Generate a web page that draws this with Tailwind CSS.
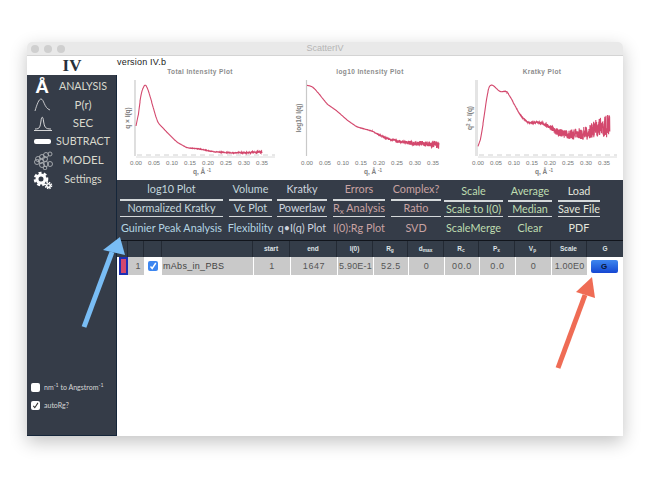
<!DOCTYPE html>
<html lang="en">
<head>
<meta charset="UTF-8">
<title>ScatterIV</title>
<script src="https://cdn.jsdelivr.net/npm/@tailwindcss/browser@4"></script>
</head>
<body class="relative w-[650px] h-[488px] overflow-hidden bg-white font-['Lato',sans-serif]">

<!-- window -->
<div class="absolute left-[27px] top-[42px] w-[596px] h-[394px] flex flex-col rounded-t-[5px] bg-white shadow-[0_6px_18px_rgba(0,0,0,0.24)]">

    <!-- title bar -->
    <div class="relative h-[14px] flex items-center justify-center rounded-t-[5px] bg-[#e9e9e9] border-b border-[#d4d4d4]">
        <div class="absolute left-[4px] flex gap-[5px]">
            <span class="w-[8px] h-[8px] rounded-full bg-[#cfcfcf]"></span>
            <span class="w-[8px] h-[8px] rounded-full bg-[#cfcfcf]"></span>
            <span class="w-[8px] h-[8px] rounded-full bg-[#cfcfcf]"></span>
        </div>
        <span class="text-[9px] text-[#b5b5b5] font-['Liberation_Sans',sans-serif]">ScatterIV</span>
    </div>

    <div class="flex flex-1 min-h-0">
        <!-- sidebar -->
        <div class="w-[90px] flex flex-col">
            <div class="h-[19px] flex items-center justify-center font-['Liberation_Serif',serif] font-bold text-[17px] text-[#27303c]">IV</div>
            <div class="flex-1 flex flex-col bg-[#353c48] border-r border-b border-[#15263a] text-[#d9d9cd] text-[10.7px]">
                <div class="h-[20px] mt-[1px] flex items-center">
                    <span class="w-[30px] text-center text-[19px] leading-none text-white font-bold font-['Liberation_Sans',sans-serif]">Å</span>
                    <span class="w-[52px] text-center">ANALYSIS</span>
                </div>
                <div class="h-[18px] flex items-center">
                    <svg class="w-[30px] h-[18px]" viewBox="0 0 30 18" fill="none" stroke="#e8e8e8" stroke-width="0.8"><path d="M8 15 C10 8 12 3 14 3 C17 3 17 12 23 14"/></svg>
                    <span class="w-[52px] text-center text-[11.5px]">P(r)</span>
                </div>
                <div class="h-[18px] flex items-center">
                    <svg class="w-[30px] h-[18px]" viewBox="0 0 30 18" fill="none" stroke="#e8e8e8" stroke-width="0.9"><path d="M8 15 C13 15 13 13 14 7 C14.500 2 16 2 16.500 7 C17.500 13 18 15 24 15"/><path d="M7 16.500H25"/></svg>
                    <span class="w-[52px] text-center text-[11.5px]">SEC</span>
                </div>
                <div class="h-[18px] flex items-center">
                    <span class="ml-[7px] w-[17px] h-[5px] rounded-[2px] bg-white"></span>
                    <span class="w-[58px] ml-[3px] text-center">SUBTRACT</span>
                </div>
                <div class="h-[20px] flex items-center">
                    <svg class="w-[30px] h-[20px]" viewBox="0 0 30 20" fill="none" stroke="#aeb1b4" stroke-width="0.9">
                        <circle cx="11" cy="9" r="2.500"/><circle cx="15" cy="7" r="2.500"/><circle cx="19" cy="5" r="2.500"/><circle cx="23" cy="4" r="2"/>
                        <circle cx="10" cy="12" r="2.500"/><circle cx="14" cy="11" r="2.500"/><circle cx="18" cy="9" r="2.500"/>
                        <circle cx="15" cy="15" r="2.500"/><circle cx="19" cy="14" r="2.500"/><circle cx="23" cy="14" r="2.500"/><circle cx="18" cy="18" r="1.800"/>
                    </svg>
                    <span class="w-[52px] text-center text-[11.5px]">MODEL</span>
                </div>
                <div class="h-[19px] flex items-center">
                    <svg class="w-[30px] h-[20px]" viewBox="0 0 30 20" fill="none" stroke="#fff">
                        <circle cx="14" cy="9" r="4" stroke-width="3"/>
                        <circle cx="14" cy="9" r="6.200" stroke-width="2.200" stroke-dasharray="3 2.200"/>
                        <circle cx="21.500" cy="15.500" r="1.800" stroke-width="1.500"/>
                        <circle cx="21.500" cy="15.500" r="3.200" stroke-width="1.200" stroke-dasharray="1.500 1"/>
                    </svg>
                    <span class="w-[52px] text-center">Settings</span>
                </div>

                <div class="mt-auto mb-[25px] ml-[4px] flex flex-col gap-[9px] text-[7px] text-[#d6d6d6]">
                    <div class="h-[9px] flex items-center gap-[4px] leading-none">
                        <span class="w-[9px] h-[9px] rounded-[2px] bg-white"></span>
                        <span>nm<sup>-1</sup> to Angstrom<sup>-1</sup></span>
                    </div>
                    <div class="h-[9px] flex items-center gap-[4px] leading-none">
                        <span class="w-[9px] h-[9px] rounded-[2px] bg-white flex items-center justify-center">
                            <svg class="w-[7px] h-[7px]" viewBox="0 0 8 8" fill="none" stroke="#333" stroke-width="1.200"><path d="M1.500 4.500L3.200 6.500L6.800 1"/></svg>
                        </span>
                        <span>autoRg?</span>
                    </div>
                </div>
            </div>
        </div>

        <!-- main column -->
        <div class="relative w-[506px] flex flex-col">
            <div class="absolute left-0 top-0 text-[9px] text-[#222] tracking-[0.2px] font-['Liberation_Sans',sans-serif]">version IV.b</div>

            <!-- plots -->
            <div class="h-[124px] flex font-['Liberation_Sans',sans-serif]">
                <svg class="w-[170px] h-[124px]" viewBox="117 56 170 124">
                    <text x="200" y="73.500" text-anchor="middle" font-size="6.500" font-weight="bold" fill="#8c8c8c" letter-spacing="0.4">Total Intensity Plot</text>
                    <path d="M135 80V156" stroke="#c9c9c9" stroke-width="1.200"/>
                    <path d="M136 157H275" stroke="#dcdcdc"/>
                    <path d="M137 155H275" stroke="#d0d0d0" stroke-dasharray="5 4"/>
                    <path id="curve1" fill="none" stroke="#d3486d" stroke-width="1.100"/>
                    <text text-anchor="middle" font-size="6.200" fill="#777" y="165">
                        <tspan x="136">0.00</tspan><tspan x="154">0.05</tspan><tspan x="172">0.10</tspan><tspan x="190">0.15</tspan><tspan x="208">0.20</tspan><tspan x="226">0.25</tspan><tspan x="244">0.30</tspan><tspan x="262">0.35</tspan>
                    </text>
                    <text x="202" y="174" text-anchor="middle" font-size="6.500" font-weight="bold" fill="#808080">q, Å <tspan font-size="4.500" dy="-2">-1</tspan></text>
                    <text transform="translate(130 118) rotate(-90)" text-anchor="middle" font-size="6.500" font-weight="bold" fill="#808080">q × I(q)</text>
                </svg>
                <svg class="w-[170px] h-[124px]" viewBox="287 56 170 124">
                    <text x="370" y="73.500" text-anchor="middle" font-size="6.500" font-weight="bold" fill="#8c8c8c" letter-spacing="0.4">log10 Intensity Plot</text>
                    <path d="M306.500 80V156" stroke="#c9c9c9" stroke-width="1.200"/>
                    <path id="curve2" fill="none" stroke="#d3486d" stroke-width="1.100"/>
                    <text text-anchor="middle" font-size="6.200" fill="#777" y="165">
                        <tspan x="307">0.00</tspan><tspan x="325">0.05</tspan><tspan x="343">0.10</tspan><tspan x="361">0.15</tspan><tspan x="379">0.20</tspan><tspan x="397">0.25</tspan><tspan x="415">0.30</tspan><tspan x="433">0.35</tspan>
                    </text>
                    <text x="373" y="174" text-anchor="middle" font-size="6.500" font-weight="bold" fill="#808080">q, Å <tspan font-size="4.500" dy="-2">-1</tspan></text>
                    <text transform="translate(301 118) rotate(-90)" text-anchor="middle" font-size="6.500" font-weight="bold" fill="#808080">log10 I(q)</text>
                </svg>
                <svg class="w-[166px] h-[124px]" viewBox="457 56 166 124">
                    <text x="542" y="73.500" text-anchor="middle" font-size="6.500" font-weight="bold" fill="#8c8c8c" letter-spacing="0.4">Kratky Plot</text>
                    <path d="M476.500 80V156" stroke="#e4e4e4" stroke-width="3"/>
                    <path d="M478 157H617" stroke="#dcdcdc"/>
                    <path d="M479 155H617" stroke="#d0d0d0" stroke-dasharray="5 4"/>
                    <path id="curve3" fill="none" stroke="#d3486d" stroke-width="1.100"/>
                    <text text-anchor="middle" font-size="6.200" fill="#777" y="165">
                        <tspan x="478">0.00</tspan><tspan x="496">0.05</tspan><tspan x="514">0.10</tspan><tspan x="532">0.15</tspan><tspan x="550">0.20</tspan><tspan x="568">0.25</tspan><tspan x="586">0.30</tspan><tspan x="604">0.35</tspan>
                    </text>
                    <text x="544" y="174" text-anchor="middle" font-size="6.500" font-weight="bold" fill="#808080">q, Å <tspan font-size="4.500" dy="-2">-1</tspan></text>
                    <text transform="translate(472 118) rotate(-90)" text-anchor="middle" font-size="6.500" font-weight="bold" fill="#808080">q<tspan font-size="4.500" dy="-2">2</tspan><tspan dy="2"> × I(q)</tspan></text>
                </svg>
            </div>

            <!-- button panel -->
            <div class="h-[60px] flex bg-[#353c48] text-[10.8px] text-center whitespace-nowrap">
                <div class="w-[103px] ml-[3px] flex flex-col text-[#c3d6dc]">
                    <div class="h-[21px] pb-[1px] flex items-center justify-center border-b-2 border-[#d5d9db]">log10 Plot</div>
                    <div class="h-[16px] flex items-center justify-center border-b border-[#d5d9db]">Normalized Kratky</div>
                    <div class="h-[22px] flex items-center justify-center text-[#b4d4e2]">Guinier Peak Analysis</div>
                </div>
                <div class="w-[43px] ml-[6px] flex flex-col text-[#c3d6dc]">
                    <div class="h-[21px] pb-[1px] flex items-center justify-center border-b-2 border-[#d5d9db]">Volume</div>
                    <div class="h-[16px] flex items-center justify-center border-b border-[#d5d9db]">Vc Plot</div>
                    <div class="h-[22px] flex items-center justify-center text-[#b4d4e2]">Flexibility</div>
                </div>
                <div class="w-[50px] ml-[5px] flex flex-col text-[#cdd4df]">
                    <div class="h-[21px] pb-[1px] flex items-center justify-center border-b-2 border-[#d5d9db]">Kratky</div>
                    <div class="h-[16px] flex items-center justify-center border-b border-[#d5d9db]">Powerlaw</div>
                    <div class="h-[22px] flex items-center justify-center">q•I(q) Plot</div>
                </div>
                <div class="w-[52px] ml-[6px] flex flex-col text-[#c9a3a3]">
                    <div class="h-[21px] pb-[1px] flex items-center justify-center border-b-2 border-[#d5d9db]">Errors</div>
                    <div class="h-[16px] flex items-center justify-center border-b border-[#d5d9db]"><span>R<sub>x</sub> Analysis</span></div>
                    <div class="h-[22px] flex items-center justify-center">I(0):Rg Plot</div>
                </div>
                <div class="w-[50px] ml-[6px] flex flex-col text-[#c9a3a3]">
                    <div class="h-[21px] pb-[1px] flex items-center justify-center border-b-2 border-[#d5d9db]">Complex?</div>
                    <div class="h-[16px] flex items-center justify-center border-b border-[#d5d9db]">Ratio</div>
                    <div class="h-[22px] flex items-center justify-center">SVD</div>
                </div>
                <div class="w-[59px] ml-[3px] flex flex-col text-[#bfdcb0]">
                    <div class="h-[22px] pt-[3px] flex items-center justify-center border-b-2 border-[#d5d9db]">Scale</div>
                    <div class="h-[15px] flex items-center justify-center border-b border-[#d5d9db]">Scale to I(0)</div>
                    <div class="h-[22px] flex items-center justify-center">ScaleMerge</div>
                </div>
                <div class="w-[44px] ml-[5px] flex flex-col text-[#bfdcb0]">
                    <div class="h-[22px] pt-[3px] flex items-center justify-center border-b-2 border-[#d5d9db]">Average</div>
                    <div class="h-[15px] flex items-center justify-center border-b border-[#d5d9db]">Median</div>
                    <div class="h-[22px] flex items-center justify-center">Clear</div>
                </div>
                <div class="w-[42px] ml-[6px] flex flex-col text-[#e4e6dc]">
                    <div class="h-[22px] pt-[3px] flex items-center justify-center border-b-2 border-[#d5d9db]">Load</div>
                    <div class="h-[15px] flex items-center justify-center border-b border-[#d5d9db]">Save File</div>
                    <div class="h-[22px] flex items-center justify-center">PDF</div>
                </div>
            </div>

            <!-- table header -->
            <div class="h-[17px] grid grid-cols-[11px_16px_18px_91px_37px_47px_36px_35px_36px_35px_36px_36px_36px_36px] bg-[#343d49] border-t border-[#11151c] text-[6.5px] font-bold text-[#dfe3e6] font-['Liberation_Sans',sans-serif] text-center leading-[16px] divide-x divide-[#232a34]">
                <div></div><div></div><div></div><div></div>
                <div>start</div><div>end</div><div>I(0)</div>
                <div>R<sub>g</sub></div><div>d<sub>max</sub></div><div>R<sub>c</sub></div><div>P<sub>x</sub></div><div>V<sub>p</sub></div>
                <div>Scale</div><div>G</div>
            </div>

            <!-- sample row -->
            <div class="h-[18px] grid grid-cols-[11px_16px_18px_91px_37px_47px_36px_35px_36px_35px_36px_36px_36px_36px] text-[9px] text-[#555] tracking-[0.6px] font-['Liberation_Sans',sans-serif] text-center leading-[18px]">
                <div class="pl-[2px]"><div class="h-[18px] border-2 border-[#1d2fb5] bg-[#d3486d]"></div></div>
                <div class="bg-[#c9c9c9] text-right pr-[3px]">1</div>
                <div class="flex items-center justify-center bg-white">
                    <span class="w-[10px] h-[10px] rounded-[2px] bg-[#3d86f0] flex items-center justify-center">
                        <svg class="w-[8px] h-[8px]" viewBox="0 0 8 8" fill="none" stroke="#fff" stroke-width="1.400"><path d="M1.500 4.500L3.200 6.500L6.800 1"/></svg>
                    </span>
                </div>
                <div class="bg-[#c9c9c9] text-left pl-[1px] tracking-[0.3px] text-[#444]">mAbs_in_PBS</div>
                <div class="bg-[#c9c9c9] border-l border-white">1</div>
                <div class="bg-[#c9c9c9] border-l border-white">1647</div>
                <div class="bg-[#c9c9c9] border-l border-white tracking-[0.2px]">5.90E-1</div>
                <div class="bg-[#c9c9c9] border-l border-white">52.5</div>
                <div class="bg-[#c9c9c9] border-l border-white">0</div>
                <div class="bg-[#c9c9c9] border-l border-white">00.0</div>
                <div class="bg-[#c9c9c9] border-l border-white">0.0</div>
                <div class="bg-[#c9c9c9] border-l border-white">0</div>
                <div class="bg-[#c9c9c9] border-l border-white tracking-[0.2px]">1.00E0</div>
                <div class="flex items-center pl-[4px]">
                    <span class="w-[27px] h-[13px] rounded-[2px] bg-gradient-to-b from-[#3f86ee] to-[#1746d2] text-[#0a1630] text-[8px] font-bold leading-[13px]">G</span>
                </div>
            </div>
        </div>
    </div>
</div>

<!-- annotation arrows -->
<svg class="absolute left-0 top-0 w-[650px] h-[488px] pointer-events-none" viewBox="0 0 650 488">
    <path d="M84 327L112 252" stroke="#79bdf5" stroke-width="5"/>
    <path d="M120 237L103 250L125 255Z" fill="#79bdf5"/>
    <path d="M558 368L585 295" stroke="#ef6c55" stroke-width="5"/>
    <path d="M592 277L576 292L595 298Z" fill="#ef6c55"/>
</svg>

<script>
    // x, y, noise amplitude
    const curves = {
        curve1: [[136,138,0],[140,98,0],[144,84,0],[146.7,85,0],[151.7,102,0],[157.3,122,0],[166.7,132,0],[176.7,142,0],[186.7,147.7,0.2],[200,149,0.3],[213,151.7,0.3],[233,153,0.5],[250,152.500,0.8],[262,152,1]],
        curve2: [[307,85,0],[313,87,0],[320,95,0],[327,104,0],[337,111,0],[347,120,0],[357,127,0.1],[372,131,0.2],[383,137,0.6],[397,141,1.300],[410,143,2],[430,144,3],[439,145,3.500]],
        curve3: [[478,153,0],[483,125,0],[488,88,0],[491,84,0],[495,87,0],[500,92,0],[507,91,0.3],[513,102,0.3],[520,115,0.4],[528,123,0.7],[538,122,1.200],[547,125,2],[557,132,3.500],[570,135,5],[587,133,7],[600,127,10],[610,125,13]]
    };

    let seed = 7;
    const rnd = () => {
        seed = (seed * 16807) % 2147483647;
        return seed / 2147483647 - 0.5;
    };

    Object.keys(curves).forEach(id => {
        let pts = curves[id], samples = [];
        for (let i = 0; i < pts.length - 1; i++) {
            let a = pts[i], b = pts[i + 1];
            for (let x = a[0]; x < b[0]; x += 0.2) {
                let t = (x - a[0]) / (b[0] - a[0]);
                samples.push([x, a[1] + (b[1] - a[1]) * t, a[2] + (b[2] - a[2]) * t]);
            }
        }
        // smooth the corners, then add the noise
        let d = samples.map((s, i) => {
            let part = samples.slice(Math.max(0, i - 12), i + 13),
                y = part.reduce((sum, p) => sum + p[1], 0) / part.length;
            return (i ? 'L' : 'M') + s[0].toFixed(1) + ' ' + (y + rnd() * 2 * s[2]).toFixed(1);
        }).join('');
        document.getElementById(id).setAttribute('d', d);
    });
</script>
</body>
</html>
